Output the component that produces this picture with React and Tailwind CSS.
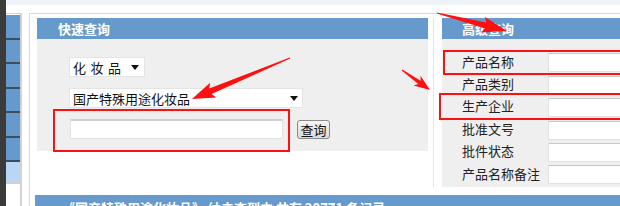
import React from 'react';

const font = "font-['Noto_Sans_CJK_SC',sans-serif]";

// polygon for a red screenshot-tool arrow
function arrowPoints(sx, sy, tx, ty, head, wing, shaft) {
  const dx = tx - sx;
  const dy = ty - sy;
  const len = Math.hypot(dx, dy);
  const ux = dx / len;
  const uy = dy / len;
  const px = -uy;
  const py = ux;
  const bx = tx - ux * head;
  const by = ty - uy * head;
  const pts = [
    [sx + px * 0.6, sy + py * 0.6],
    [bx + px * shaft, by + py * shaft],
    [bx - ux * 3 + px * wing, by - uy * 3 + py * wing],
    [tx, ty],
    [bx - ux * 3 - px * wing, by - uy * 3 - py * wing],
    [bx - px * shaft, by - py * shaft],
    [sx - px * 0.6, sy - py * 0.6],
  ];
  return pts.map((p) => p.map((n) => n.toFixed(1)).join(',')).join(' ');
}

const Caret = () => (
  <svg width="8" height="5" viewBox="0 0 8 5">
    <polygon points="0,0 8,0 4,5" fill="#111" />
  </svg>
);

const Field = () => (
  <div className="h-[19px] flex-1 bg-white border border-[#e2e2e2] border-t-[#c8c8c8]"></div>
);

const rows = ['产品名称', '产品类别', '生产企业', '批准文号', '批件状态', '产品名称备注'];

const tabs = [0, 1, 2, 3, 4, 5];

export default function App() {
  return (
    <div className={`relative w-[620px] h-[206px] overflow-hidden bg-white flex ${font}`}>
      <div className="w-[6px] h-full shrink-0 bg-[#3b3b3b]"></div>

      <div className="flex-1 min-h-0 flex flex-col overflow-hidden">
        <div className="h-[5px] shrink-0 bg-[#eef3fa]"></div>
        <div className="h-[8px] shrink-0"></div>

        <div className="flex flex-1 min-h-0 overflow-hidden">
          {/* side tabs */}
          <div className="w-[16px] shrink-0 border-r-2 border-t border-[#d2d2d2] pt-[1px] flex flex-col">
            {tabs.map((t) => (
              <div key={t} className="h-[24.5px] shrink-0 bg-[#6699cc] border-b-2 border-[#3d4d60]"></div>
            ))}
            <div className="h-[22px] shrink-0 bg-[#b9d6f4] border-b-2 border-[#cfcfcf]"></div>
            <div className="flex-1 bg-white"></div>
          </div>

          <div className="w-[7px] shrink-0"></div>

          <div className="flex-1 border-l border-t border-[#d8d8d8] pt-[4px] pl-[7px]">
            <div className="flex items-start">
              {/* quick search */}
              <div className="w-[391px] shrink-0">
                <div className="h-[21px] bg-[#6699cc] flex items-center pl-[21px] text-[13px] font-bold text-white">
                  快速查询
                </div>
                <div className="h-[112px] bg-[#efefef] pl-[32px] pt-[18px] text-[13px] text-[#111]">
                  <div className="w-[76px] h-[20px] bg-white border border-[#e4e4e4] flex items-center justify-between pl-[3px] pr-[5px]">
                    <span className="tracking-[4.5px] leading-none">化妆品</span>
                    <Caret />
                  </div>
                  <div className="mt-[11px] w-[234px] h-[20px] bg-white border border-[#e4e4e4] flex items-center justify-between pl-[3px] pr-[4px]">
                    <span className="leading-none">国产特殊用途化妆品</span>
                    <Caret />
                  </div>
                  <div className="mt-[11px] flex items-center">
                    <div className="ml-[1px] w-[213px] h-[20px] bg-white border border-[#e2e2e2] border-t-2 border-t-[#cfcfcf]"></div>
                    <div className="ml-[14px] w-[33px] h-[19px] rounded-[3px] border border-[#8a8a8a] bg-gradient-to-b from-[#f6f6f6] to-[#d9d9d9] flex items-center justify-center leading-none">
                      查询
                    </div>
                  </div>
                </div>
              </div>

              <div className="w-[5px] shrink-0"></div>
              <div className="w-px h-[169px] shrink-0 bg-[#e4e4e4]"></div>
              <div className="w-[8px] shrink-0"></div>

              {/* advanced search */}
              <div className="w-[190px] shrink-0">
                <div className="h-[21px] bg-[#6699cc] flex items-center pl-[20px] text-[13px] font-bold text-white">
                  高级查询
                </div>
                <div className="h-[148px] bg-[#efefef] pt-[11px] text-[13px] text-[#222]">
                  {rows.map((r) => (
                    <div key={r} className="h-[22.4px] flex items-end">
                      <div className="w-[106px] h-full pl-[20px] flex items-center leading-none">{r}</div>
                      <Field />
                    </div>
                  ))}
                </div>
              </div>
            </div>

            <div className="mt-[8px] -ml-[2px] h-[24px] bg-[#6699cc] pl-[27px] pt-[3px] text-[13px] font-bold text-white whitespace-nowrap">
              《国产特殊用途化妆品》 纳未查到中 共有 20771 条记录
            </div>
          </div>
        </div>
      </div>

      {/* annotations */}
      <svg className="absolute left-0 top-0 pointer-events-none" width="620" height="206">
        <rect x="54" y="110" width="235" height="41" fill="none" stroke="#ff1010" strokeWidth="2" />
        <rect x="444" y="51" width="190" height="23" fill="none" stroke="#ff1010" strokeWidth="2" />
        <rect x="440" y="94" width="194" height="25" fill="none" stroke="#ff1010" strokeWidth="2" />
        <polygon points={arrowPoints(290, 58, 192, 99, 20, 8, 3)} fill="#ff1010" />
        <polygon points={arrowPoints(437, 13, 507, 31, 22, 8, 3)} fill="#ff1010" />
        <polygon points={arrowPoints(402, 70, 430, 90, 13, 6, 2)} fill="#ff1010" />
      </svg>
    </div>
  );
}
